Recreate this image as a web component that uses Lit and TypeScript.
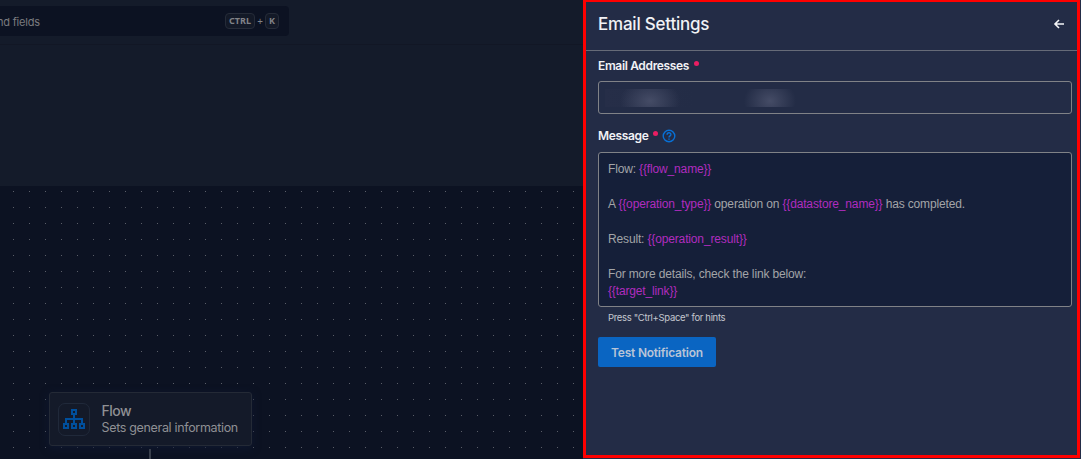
import { LitElement, html, css, svg } from "lit";
import { customElement } from "lit/decorators.js";

@customElement("flow-canvas")
class FlowCanvas extends LitElement {
  static styles = css`
    :host { display: flex; flex-direction: column; min-width: 0; overflow: hidden; background: #0c1222; color: #8f9094; }
    * { box-sizing: border-box; }
    .topbar { height: 45px; flex: none; padding-top: 6px; background: #141b2a; border-bottom: 1px solid #121725; }
    .search { width: 289px; height: 30px; padding: 0 10px 0 0; display: flex; align-items: center; justify-content: space-between; background: #0c1222; border-radius: 0 4px 4px 0; }
    .query { font-size: 11px; letter-spacing: -0.2px; margin-left: -3px; color: #7a7b7f; white-space: nowrap; padding-top: 1px; }
    .keys { display: flex; align-items: center; font: 10px "Noto Sans", sans-serif; color: #808287; }
    kbd { font: 700 9px/14px "Noto Sans", sans-serif; height: 16px; border: 1px solid #252b38; border-radius: 4px; text-align: center; background: #131927; color: #808287; }
    .ctrl { width: 30px; }
    .k { width: 14px; }
    .plus { width: 10px; text-align: center; }
    .band { height: 141px; flex: none; background: #141b2a; }
    .board { position: relative; flex: 1; }
    .dots { display: block; width: 100%; height: 100%; }
    .node { position: absolute; left: 49px; top: 206px; width: 203px; height: 54px; border: 1px solid #242a36; border-radius: 3px; background: #141a29; display: flex; align-items: center; padding-left: 8px; box-shadow: 0 2px 8px #0f1830; }
    .tile { width: 32px; height: 33px; border: 1px solid #20293a; border-radius: 7px; display: grid; place-items: center; flex: none; }
    .copy { margin-left: 11.5px; white-space: nowrap; }
    .name { font-size: 14px; line-height: 16px; font-weight: 500; letter-spacing: -0.5px; }
    .about { font-size: 12.5px; line-height: 17px; letter-spacing: -0.33px; }
    .wire { position: absolute; left: 149px; top: 263px; width: 2px; height: 10px; background: #393f4c; }
  `;
  render() {
    return html`
      <div class="topbar">
        <div class="search">
          <span class="query">nd fields</span>
          <span class="keys"><kbd class="ctrl">CTRL</kbd><span class="plus">+</span><kbd class="k">K</kbd></span>
        </div>
      </div>
      <div class="band"></div>
      <div class="board">
        <svg class="dots">
          <defs><pattern id="p" width="16" height="16" patternUnits="userSpaceOnUse" x="13" y="5"><rect width="1" height="1" fill="#5a5e68"/></pattern></defs>
          <rect width="100%" height="100%" fill="url(#p)"/>
        </svg>
        <div class="node">
          <div class="tile">
            <svg width="24" height="22" viewBox="0 0 24 22" fill="none" stroke="#004f9c" stroke-width="2">
              ${svg`<path d="M10 2h4v4h-4zM2 16h4v4H2zM10 16h4v4h-4zM18 16h4v4h-4zM12 7v8M4 15v-4h16v4"/>`}
            </svg>
          </div>
          <div class="copy"><div class="name">Flow</div><div class="about">Sets general information</div></div>
        </div>
        <div class="wire"></div>
      </div>`;
  }
}

@customElement("email-settings")
class EmailSettings extends LitElement {
  static styles = css`
    :host { display: block; box-sizing: border-box; height: 458px; border: 3px solid #ff0000; border-top-width: 2px; background: #232c46; color: #f1f2f5; }
    * { box-sizing: border-box; }
    header { height: 49px; border-bottom: 1px solid #666b78; padding: 0 12px; display: flex; align-items: center; justify-content: space-between; }
    h1 { margin: 0; padding-bottom: 4px; font-size: 17px; font-weight: 500; letter-spacing: -0.22px; }
    .back { display: block; margin-bottom: 4px; }
    .body { padding: 0 5px 0 12px; }
    .label { display: flex; align-items: center; font-size: 12px; line-height: 16px; font-weight: 600; letter-spacing: -0.35px; }
    .first { padding-top: 7px; }
    .second { margin-top: 14px; }
    .req { width: 5px; height: 5px; border-radius: 50%; background: #ea1e63; margin: -6px 0 0 5px; }
    .help { margin-left: 4px; }
    .field { height: 33px; margin-top: 7px; border: 1px solid #808287; border-radius: 3px; padding: 7px 6px; }
    .redacted { width: 210px; height: 18px; background: radial-gradient(ellipse 30px 22px at 45px 12px, #454c66, transparent), radial-gradient(ellipse 26px 22px at 165px 12px, #454c66, transparent), linear-gradient(90deg, #262e48, #232c46 90px); }
    .editor { height: 155px; margin-top: 8px; border: 1px solid #808287; border-radius: 3px; background: #151f39; padding: 8px 9px; font: 12px/17.46px "Liberation Sans", Arial, sans-serif; letter-spacing: -0.15px; color: #a3a5a8; white-space: pre; }
    .var { color: #b02cbf; }
    .hint { margin: 4px 0 0 10px; font-size: 9.5px; line-height: 14px; letter-spacing: -0.33px; color: #c4c7cf; }
    button { display: block; margin: 12px 0 0; width: 118px; height: 30px; padding: 0; border: 0; border-radius: 2px; background: #0a65c2; color: #b8c4d7; font: 600 12px Inter, sans-serif; letter-spacing: -0.22px; }
  `;
  private v(name: string) {
    return html`<span class="var">{{${name}}}</span>`;
  }
  render() {
    return html`
      <header>
        <h1>Email Settings</h1>
        <svg class="back" width="12" height="12" viewBox="0 0 12 12" fill="none" stroke="#f4f5f7" stroke-width="1.6"><path d="M11 6H2M6 2L2 6l4 4"/></svg>
      </header>
      <div class="body">
        <div class="label first"><span>Email Addresses</span><i class="req"></i></div>
        <div class="field"><div class="redacted"></div></div>
        <div class="label second"><span>Message</span><i class="req"></i>
          <svg class="help" width="14" height="14" viewBox="0 0 14 14" fill="none" stroke="#0870d5" stroke-width="1.4"><circle cx="7" cy="7" r="5.8"/><path d="M5.1 5.7C5.1 3.2 8.9 3.2 8.9 5.5C8.9 6.9 7 6.9 7 8.6M7 9.4v1.3"/></svg>
        </div>
        <div class="editor">Flow: ${this.v("flow_name")}

A ${this.v("operation_type")} operation on ${this.v("datastore_name")} has completed.

Result: ${this.v("operation_result")}

For more details, check the link below:
${this.v("target_link")}</div>
        <div class="hint">Press "Ctrl+Space" for hints</div>
        <button>Test Notification</button>
      </div>`;
  }
}

@customElement("app-root")
class AppRoot extends LitElement {
  static styles = css`
    :host { display: grid; grid-template-columns: 583px 497px 1px; height: 459px; overflow: hidden; background: #232c46; font-family: Inter, sans-serif; }
    flow-canvas { height: 459px; }
  `;
  render() {
    return html`<flow-canvas></flow-canvas><email-settings></email-settings>`;
  }
}
